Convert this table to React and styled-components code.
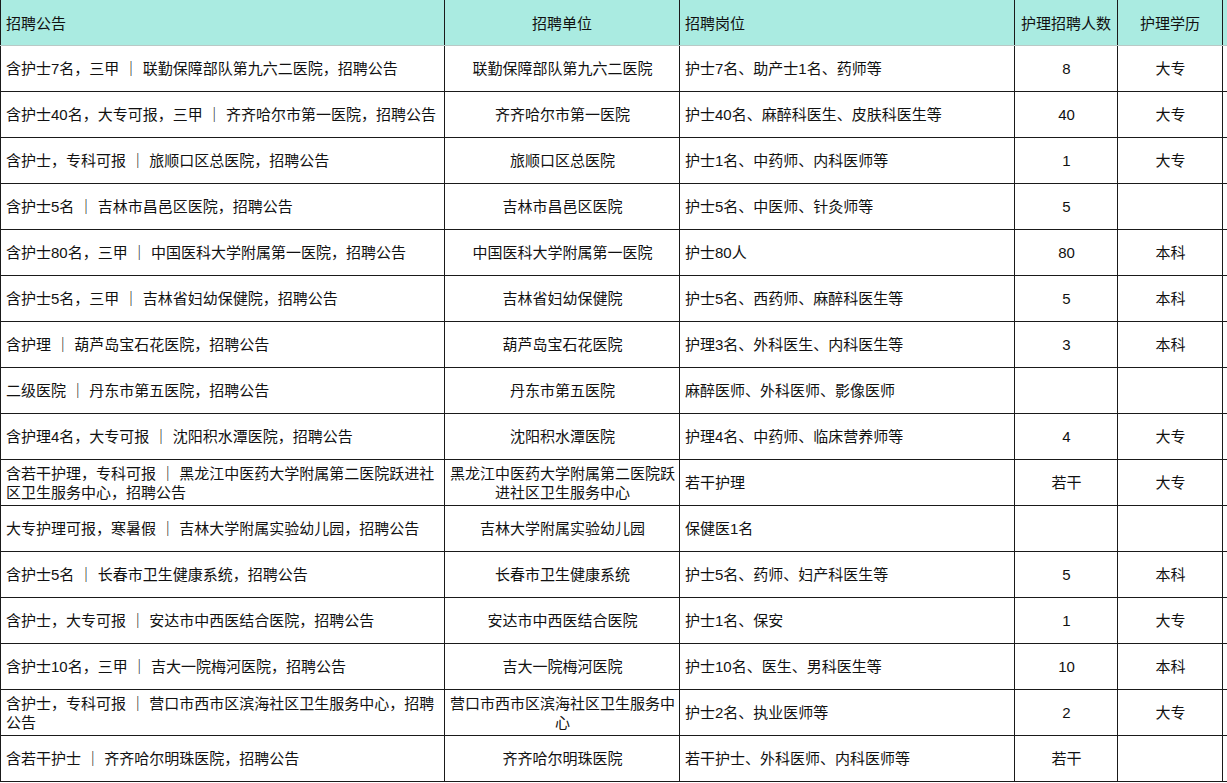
import React from "react";
import styled, { createGlobalStyle } from "styled-components";

const Global = createGlobalStyle`
  html, body { margin: 0; padding: 0; background: #fff; overflow: hidden; }
  body { font-family: "Liberation Sans", "Noto Sans CJK SC", sans-serif; }
`;

const Table = styled.table`
  border-collapse: collapse;
  table-layout: fixed;
  width: 1330px;
  font-size: 15px;
  color: #111;
`;

const HeadCell = styled.th`
  background: #aaebe1;
  font-weight: normal;
  height: 45px;
  padding: 0 5px;
  border-left: 1px solid #1a1a1a;
  border-right: 1px solid #1a1a1a;
  border-bottom: 1px solid #b9c9c6;
  text-align: ${(p) => (p.$left ? "left" : "center")};
  vertical-align: middle;
`;

const Cell = styled.td`
  height: 45px;
  padding: 0 4px 0 5px;
  border: 1px solid #1a1a1a;
  line-height: 19px;
  text-align: ${(p) => (p.$left ? "left" : "center")};
  vertical-align: middle;
  word-break: break-all;
`;

const cols = [
  { title: "招聘公告", width: 444, left: true },
  { title: "招聘单位", width: 235 },
  { title: "招聘岗位", width: 335, left: true },
  { title: "护理招聘人数", width: 103 },
  { title: "护理学历", width: 105 },
  { title: "", width: 108 },
];

const rows = [
  ["含护士7名，三甲 ｜ 联勤保障部队第九六二医院，招聘公告", "联勤保障部队第九六二医院", "护士7名、助产士1名、药师等", "8", "大专"],
  ["含护士40名，大专可报，三甲 ｜ 齐齐哈尔市第一医院，招聘公告", "齐齐哈尔市第一医院", "护士40名、麻醉科医生、皮肤科医生等", "40", "大专"],
  ["含护士，专科可报 ｜ 旅顺口区总医院，招聘公告", "旅顺口区总医院", "护士1名、中药师、内科医师等", "1", "大专"],
  ["含护士5名 ｜ 吉林市昌邑区医院，招聘公告", "吉林市昌邑区医院", "护士5名、中医师、针灸师等", "5", ""],
  ["含护士80名，三甲 ｜ 中国医科大学附属第一医院，招聘公告", "中国医科大学附属第一医院", "护士80人", "80", "本科"],
  ["含护士5名，三甲 ｜ 吉林省妇幼保健院，招聘公告", "吉林省妇幼保健院", "护士5名、西药师、麻醉科医生等", "5", "本科"],
  ["含护理 ｜ 葫芦岛宝石花医院，招聘公告", "葫芦岛宝石花医院", "护理3名、外科医生、内科医生等", "3", "本科"],
  ["二级医院 ｜ 丹东市第五医院，招聘公告", "丹东市第五医院", "麻醉医师、外科医师、影像医师", "", ""],
  ["含护理4名，大专可报 ｜ 沈阳积水潭医院，招聘公告", "沈阳积水潭医院", "护理4名、中药师、临床营养师等", "4", "大专"],
  ["含若干护理，专科可报 ｜ 黑龙江中医药大学附属第二医院跃进社区卫生服务中心，招聘公告", "黑龙江中医药大学附属第二医院跃进社区卫生服务中心", "若干护理", "若干", "大专"],
  ["大专护理可报，寒暑假 ｜ 吉林大学附属实验幼儿园，招聘公告", "吉林大学附属实验幼儿园", "保健医1名", "", ""],
  ["含护士5名 ｜ 长春市卫生健康系统，招聘公告", "长春市卫生健康系统", "护士5名、药师、妇产科医生等", "5", "本科"],
  ["含护士，大专可报 ｜ 安达市中西医结合医院，招聘公告", "安达市中西医结合医院", "护士1名、保安", "1", "大专"],
  ["含护士10名，三甲 ｜ 吉大一院梅河医院，招聘公告", "吉大一院梅河医院", "护士10名、医生、男科医生等", "10", "本科"],
  ["含护士，专科可报 ｜ 营口市西市区滨海社区卫生服务中心，招聘公告", "营口市西市区滨海社区卫生服务中心", "护士2名、执业医师等", "2", "大专"],
  ["含若干护士 ｜ 齐齐哈尔明珠医院，招聘公告", "齐齐哈尔明珠医院", "若干护士、外科医师、内科医师等", "若干", ""],
];

export default function App() {
  return (
    <>
      <Global />
      <Table>
        <colgroup>
          {cols.map((c, i) => (
            <col key={i} style={{ width: c.width }} />
          ))}
        </colgroup>
        <thead>
          <tr>
            {cols.map((c, i) => (
              <HeadCell key={i} $left={c.left}>
                {c.title}
              </HeadCell>
            ))}
          </tr>
        </thead>
        <tbody>
          {rows.map((r, i) => (
            <tr key={i}>
              {[...r, ""].map((v, j) => (
                <Cell key={j} $left={cols[j].left}>
                  {v}
                </Cell>
              ))}
            </tr>
          ))}
        </tbody>
      </Table>
    </>
  );
}
